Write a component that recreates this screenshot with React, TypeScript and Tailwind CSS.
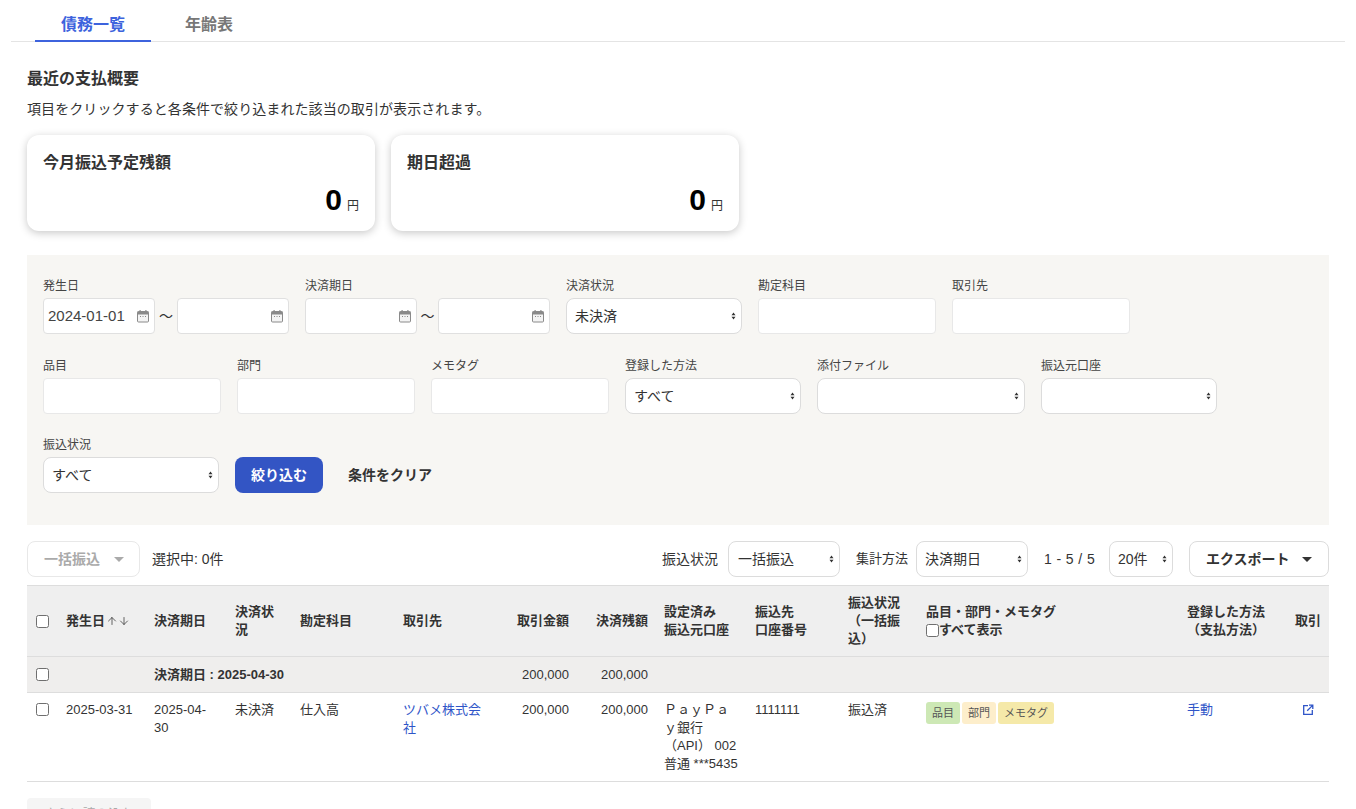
import React from "react";
import { ArrowUp, ArrowDown } from "lucide-react";

const FONT = "font-['Liberation_Sans','Noto_Sans_CJK_JP',sans-serif]";

function CalendarIcon() {
  return (
    <svg width="14" height="14" viewBox="0 0 14 14" className="shrink-0">
      <rect x="1.5" y="2.5" width="11" height="10.5" rx="1" fill="#f4f4f4" stroke="#8a8a8a" />
      <rect x="1.5" y="2.5" width="11" height="3" fill="#8a8a8a" />
      <rect x="3.5" y="1" width="1.2" height="2" fill="#8a8a8a" />
      <rect x="9.3" y="1" width="1.2" height="2" fill="#8a8a8a" />
      <path d="M4 7.5h1M6.5 7.5h1M9 7.5h1" stroke="#8a8a8a" strokeWidth="1" />
    </svg>
  );
}

function SelectArrows() {
  return (
    <svg width="5" height="9" viewBox="0 0 6 10" className="absolute right-[6px] top-1/2 -translate-y-1/2 pointer-events-none">
      <path d="M3 .8 5.4 4H.6zM3 9.2.6 6h4.8z" fill="#333" />
    </svg>
  );
}

function DateBox({ value }: { value?: string }) {
  return (
    <div className="w-[112px] h-[36px] bg-white border border-[#e0e0e0] rounded-[4px] flex items-center justify-between pl-[4px] pr-[4px] text-[15px] text-[#444]">
      <span>{value}</span>
      <CalendarIcon />
    </div>
  );
}

function Field({ label, children }: { label: string; children: React.ReactNode }) {
  return (
    <div className="flex flex-col">
      <label className="h-[18px] mb-[4px] text-[12px] leading-[20px] text-[#444]">{label}</label>
      {children}
    </div>
  );
}

function TextBox({ w = "w-[178px]" }: { w?: string }) {
  return <input className={`${w} h-[36px] bg-white border border-[#e8e8e8] rounded-[4px]`} />;
}

function Select({ value, className, pad = "pl-[8px]" }: { value: string; className: string; pad?: string }) {
  return (
    <div className={`relative ${className}`}>
      <select
        defaultValue={value}
        className={`appearance-none w-full h-[36px] bg-white border border-[#dcdcdc] rounded-[8px] ${pad} pr-4 text-[14px] text-[#333] outline-none`}
      >
        <option value={value}>{value}</option>
      </select>
      <SelectArrows />
    </div>
  );
}

function Check({ className = "" }: { className?: string }) {
  return <input type="checkbox" className={`appearance-none block w-[13px] h-[13px] bg-white border border-[#6f6f6f] rounded-[2.5px] ${className}`} />;
}

function Tag({ label, color }: { label: string; color: string }) {
  return <span className={`h-[22px] px-[6px] rounded-[3px] text-[11px] leading-[22px] whitespace-nowrap text-[#555] ${color}`}>{label}</span>;
}

const TH = "px-2 py-0 align-middle text-left font-bold text-[13px] leading-[18px] text-[#333]";
const TD = "px-2 pt-[8px] pb-[8px] align-top text-[13px] leading-[18px] text-[#333]";

export default function App() {
  return (
    <div className={`${FONT} w-[1356px] h-[809px] overflow-hidden bg-white text-[#333]`}>
      {/* tabs */}
      <div className="mx-[11px] h-[42px] border-b border-[#e4e4e4] flex pl-[24px]">
        <div className="w-[116px] h-[42px] border-b-2 border-[#3d63dd] text-center text-[16px] font-bold leading-[50px] text-[#3d63dd]">債務一覧</div>
        <div className="ml-[34px] text-[16px] font-bold leading-[50px] text-[#777]">年齢表</div>
      </div>

      <div className="px-[27px]">
        {/* summary */}
        <h2 className="mt-[26px] text-[16px] leading-[22px] font-bold text-[#333]">最近の支払概要</h2>
        <p className="mt-[9px] text-[14px] tracking-[0.08px] leading-[20px] text-[#333]">項目をクリックすると各条件で絞り込まれた該当の取引が表示されます。</p>
        <div className="mt-[16px] flex gap-4">
          {["今月振込予定残額", "期日超過"].map((title) => (
            <div key={title} className="w-[348px] h-[96px] bg-white rounded-[12px] shadow-[0_2px_8px_rgba(0,0,0,0.22)] px-4 pt-[17px]">
              <div className="text-[16px] leading-[22px] font-bold text-[#333]">{title}</div>
              <div className="mt-[9px] flex items-baseline justify-end gap-[5px]">
                <span className="text-[30px] leading-[34px] font-bold text-black">0</span>
                <span className="text-[12px] text-[#333]">円</span>
              </div>
            </div>
          ))}
        </div>

        {/* filters */}
        <div className="mt-[24px] h-[270px] bg-[#f7f6f3] px-4 pt-[21px]">
          <div className="flex gap-4">
            <Field label="発生日">
              <div className="flex items-center">
                <DateBox value="2024-01-01" />
                <span className="w-[22px] text-center text-[14px]">〜</span>
                <DateBox />
              </div>
            </Field>
            <Field label="決済期日">
              <div className="flex items-center">
                <DateBox />
                <span className="w-[21px] text-center text-[14px]">〜</span>
                <DateBox />
              </div>
            </Field>
            <Field label="決済状況">
              <Select value="未決済" className="w-[176px]" />
            </Field>
            <Field label="勘定科目">
              <TextBox />
            </Field>
            <Field label="取引先">
              <TextBox />
            </Field>
          </div>
          <div className="mt-[22px] flex gap-4">
            <Field label="品目">
              <TextBox />
            </Field>
            <Field label="部門">
              <TextBox />
            </Field>
            <Field label="メモタグ">
              <TextBox />
            </Field>
            <Field label="登録した方法">
              <Select value="すべて" className="w-[176px]" />
            </Field>
            <Field label="添付ファイル">
              <Select value="" className="w-[208px]" />
            </Field>
            <Field label="振込元口座">
              <Select value="" className="w-[176px]" />
            </Field>
          </div>
          <div className="mt-[21px] flex gap-4 items-end">
            <Field label="振込状況">
              <Select value="すべて" className="w-[176px]" />
            </Field>
            <button className="w-[88px] h-[36px] rounded-[8px] bg-[#3355c4] text-white text-[14px] font-bold">絞り込む</button>
            <button className="h-[36px] px-[9px] text-[14px] font-bold text-[#333]">条件をクリア</button>
          </div>
        </div>

        {/* toolbar */}
        <div className="mt-[16px] h-[36px] flex items-center text-[14px]">
          <div className="w-[113px] h-[36px] border border-[#e8e8e8] rounded-[8px] flex items-center justify-between pl-4 pr-[15px] text-[#aaa] font-bold">
            一括振込
            <span className="w-0 h-0 border-x-[5px] border-x-transparent border-t-[5px] border-t-[#aaa]" />
          </div>
          <span className="ml-3">選択中: 0件</span>
          <span className="ml-auto">振込状況</span>
          <Select value="一括振込" className="ml-[10px] w-[112px]" pad="pl-[9px]" />
          <span className="ml-4 text-[13px]">集計方法</span>
          <Select value="決済期日" className="ml-2 w-[112px]" />
          <span className="ml-4 w-[65px] tracking-[0.4px]">1 - 5 / 5</span>
          <Select value="20件" className="w-[64px]" />
          <button className="ml-4 w-[140px] h-[36px] border border-[#dcdcdc] rounded-[8px] flex items-center justify-between pl-4 pr-[16px] font-bold text-[#333]">
            エクスポート
            <span className="w-0 h-0 border-x-[5px] border-x-transparent border-t-[5px] border-t-[#333]" />
          </button>
        </div>

        {/* table */}
        <table className="mt-2 w-[1302px] table-fixed border-collapse">
          <colgroup>
            <col className="w-[31px]" />
            <col className="w-[88px]" />
            <col className="w-[81px]" />
            <col className="w-[65px]" />
            <col className="w-[103px]" />
            <col className="w-[103px]" />
            <col className="w-[79px]" />
            <col className="w-[79px]" />
            <col className="w-[91px]" />
            <col className="w-[93px]" />
            <col className="w-[78px]" />
            <col className="w-[261px]" />
            <col className="w-[108px]" />
            <col className="w-[42px]" />
          </colgroup>
          <thead>
            <tr className="h-[71px] bg-[#efefef] border-y border-[#dddddd]">
              <th className="pl-[9px] align-middle">
                <Check />
              </th>
              <th className={TH}>
                <span className="flex items-center">
                  発生日
                  <ArrowUp size={12} strokeWidth={1.5} className="ml-[1px]" />
                  <ArrowDown size={12} strokeWidth={1.5} />
                </span>
              </th>
              <th className={TH}>決済期日</th>
              <th className={TH}>決済状況</th>
              <th className={TH}>勘定科目</th>
              <th className={TH}>取引先</th>
              <th className={`${TH} !text-right`}>取引金額</th>
              <th className={`${TH} !text-right`}>決済残額</th>
              <th className={TH}>
                設定済み
                <br />
                振込元口座
              </th>
              <th className={TH}>
                振込先
                <br />
                口座番号
              </th>
              <th className={TH}>
                振込状況
                <br />
                （一括振込）
              </th>
              <th className={TH}>
                品目・部門・メモタグ
                <span className="flex items-center">
                  <Check />
                  すべて表示
                </span>
              </th>
              <th className={TH}>
                登録した方法
                <br />
                （支払方法）
              </th>
              <th className={TH}>取引</th>
            </tr>
          </thead>
          <tbody>
            <tr className="h-[36px] bg-[#efeeed] border-b border-[#dddddd]">
              <td className="pl-[9px] align-middle">
                <Check />
              </td>
              <td />
              <td colSpan={4} className="px-2 align-middle text-[13px] font-bold whitespace-nowrap">
                決済期日 : 2025-04-30
              </td>
              <td className="px-2 align-middle text-right text-[13px]">200,000</td>
              <td className="px-2 align-middle text-right text-[13px]">200,000</td>
              <td colSpan={6} />
            </tr>
            <tr className="border-b border-[#dddddd]">
              <td className="pl-[9px] pt-[10px] align-top">
                <Check />
              </td>
              <td className={TD}>2025-03-31</td>
              <td className={TD}>2025-04-30</td>
              <td className={TD}>未決済</td>
              <td className={TD}>仕入高</td>
              <td className={TD}>
                <a className="text-[#2f55c8]">ツバメ株式会社</a>
              </td>
              <td className={`${TD} text-right`}>200,000</td>
              <td className={`${TD} text-right`}>200,000</td>
              <td className={TD}>ＰａｙＰａｙ銀行（API） 002 普通 ***5435</td>
              <td className={TD}>1111111</td>
              <td className={TD}>振込済</td>
              <td className="px-2 pt-[9px] align-top">
                <div className="flex gap-[2px]">
                  <Tag label="品目" color="bg-[#cde8b5]" />
                  <Tag label="部門" color="bg-[#fdeecb]" />
                  <Tag label="メモタグ" color="bg-[#f5e9a9]" />
                </div>
              </td>
              <td className={TD}>
                <a className="text-[#2f55c8]">手動</a>
              </td>
              <td className="px-2 pt-[11px] align-top">
                <svg width="12" height="12" viewBox="0 0 12 12" fill="none" stroke="#2f55c8" strokeWidth="1.3" className="ml-[7px]">
                  <path d="M6 1.7H1.7v8.6h8.6V6M7 1.2h3.8V5M10.6 1.4 5.2 6.8" />
                </svg>
              </td>
            </tr>
          </tbody>
        </table>

        <button className="mt-4 w-[124px] h-[32px] bg-[#f5f5f5] rounded-[4px] text-[13px] text-[#aaa]">さらに読み込む</button>
      </div>
    </div>
  );
}
